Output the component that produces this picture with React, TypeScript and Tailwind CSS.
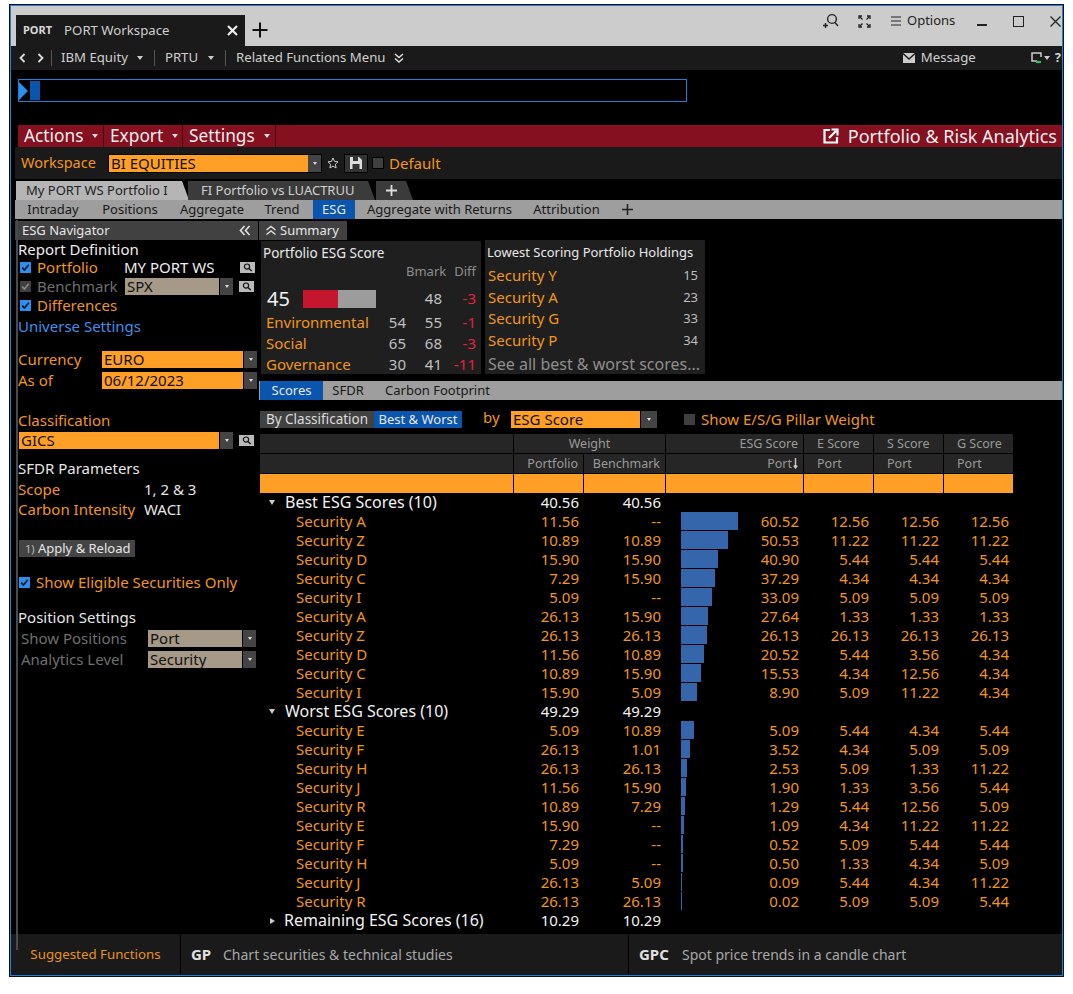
import React from "react";

const O = "text-[#f0961e]";

function Caret({ className = "" }: { className?: string }) {
  return <span className={`inline-block w-0 h-0 border-x-[3px] border-x-transparent border-t-[4px] border-t-current ${className}`} />;
}

function Check({ on = true }: { on?: boolean }) {
  return (
    <span className={`w-[11px] h-[11px] flex items-center justify-center shrink-0 ${on ? "bg-[#2a8fef]" : "bg-[#3f3f3f]"}`}>
      <svg width="9" height="9" viewBox="0 0 9 9"><path d="M1.2 4.6 3.4 7 7.8 1.8" fill="none" stroke={on ? "#06121f" : "#888"} strokeWidth="1.6" /></svg>
    </span>
  );
}

function Find() {
  return (
    <span className="w-[15px] h-[11px] bg-[#b9b9b9] flex items-center justify-center shrink-0">
      <svg width="10" height="9" viewBox="0 0 10 9"><circle cx="4" cy="3.6" r="2.6" fill="none" stroke="#111" strokeWidth="1.2" /><path d="M6 5.6 8.6 8" stroke="#111" strokeWidth="1.4" /></svg>
    </span>
  );
}

function Drop({ label, w, tone = "orange", btn = 13 }: { label: string; w: string; tone?: "orange" | "tan"; btn?: number }) {
  const bg = tone === "orange" ? "bg-[#ff9f25]" : "bg-[#a69987]";
  return (
    <div className="flex h-[17px] shrink-0 items-stretch">
      <div className={`${w} ${bg} text-[#111] pl-[2px] leading-[17px] text-[15px] whitespace-nowrap`}>{label}</div>
      <div className="ml-px bg-[#444] text-[#ddd] flex items-center justify-center" style={{ width: btn }}>
        <Caret className="!border-x-[2px] !border-t-[3px]" />
      </div>
    </div>
  );
}

const best: [string, string, string, number, string, string, string, string][] = [
  ["Security A", "11.56", "--", 57, "60.52", "12.56", "12.56", "12.56"],
  ["Security Z", "10.89", "10.89", 47, "50.53", "11.22", "11.22", "11.22"],
  ["Security D", "15.90", "15.90", 37, "40.90", "5.44", "5.44", "5.44"],
  ["Security C", "7.29", "15.90", 34, "37.29", "4.34", "4.34", "4.34"],
  ["Security I", "5.09", "--", 31, "33.09", "5.09", "5.09", "5.09"],
  ["Security A", "26.13", "15.90", 27, "27.64", "1.33", "1.33", "1.33"],
  ["Security Z", "26.13", "26.13", 26, "26.13", "26.13", "26.13", "26.13"],
  ["Security D", "11.56", "10.89", 23, "20.52", "5.44", "3.56", "4.34"],
  ["Security C", "10.89", "15.90", 20, "15.53", "4.34", "12.56", "4.34"],
  ["Security I", "15.90", "5.09", 16, "8.90", "5.09", "11.22", "4.34"],
];
const worst: typeof best = [
  ["Security E", "5.09", "10.89", 13, "5.09", "5.44", "4.34", "5.44"],
  ["Security F", "26.13", "1.01", 9, "3.52", "4.34", "5.09", "5.09"],
  ["Security H", "26.13", "26.13", 6, "2.53", "5.09", "1.33", "11.22"],
  ["Security J", "11.56", "15.90", 5, "1.90", "1.33", "3.56", "5.44"],
  ["Security R", "10.89", "7.29", 4, "1.29", "5.44", "12.56", "5.09"],
  ["Security E", "15.90", "--", 3, "1.09", "4.34", "11.22", "11.22"],
  ["Security F", "7.29", "--", 2, "0.52", "5.09", "5.44", "5.44"],
  ["Security H", "5.09", "--", 2, "0.50", "1.33", "4.34", "5.09"],
  ["Security J", "26.13", "5.09", 1, "0.09", "5.44", "4.34", "11.22"],
  ["Security R", "26.13", "26.13", 1, "0.02", "5.09", "5.09", "5.44"],
];

const GRID = "grid grid-cols-[254px_65px_82px_138px_70px_70px_70px] h-[19px] leading-[19px] text-[15px]";

function Group({ label, p, b, open = true }: { label: string; p: string; b: string; open?: boolean }) {
  return (
    <div className={`${GRID} text-[#f2f2f2]`}>
      <div className="flex items-center pl-[9px]">
        {open ? (
          <span className="w-0 h-0 border-x-[3px] border-x-transparent border-t-[5px] border-t-[#ccc]" />
        ) : (
          <span className="w-0 h-0 border-y-[3px] border-y-transparent border-l-[5px] border-l-[#ccc] mx-[1px] -mr-[1px]" />
        )}
        <span className="whitespace-nowrap text-[16px] ml-[10px]">{label}</span>
      </div>
      <div className="text-right">{p}</div>
      <div className="text-right">{b}</div>
    </div>
  );
}

function Row({ r }: { r: (typeof best)[number] }) {
  return (
    <div className={`${GRID} ${O}`}>
      <div className="pl-[36px]">{r[0]}</div>
      <div className="text-right">{r[1]}</div>
      <div className="text-right">{r[2]}</div>
      <div className="relative text-right">
        <div className="absolute left-[20px] top-0 h-[18px] bg-[#3566ab]" style={{ width: r[3] }} />
        {r[4]}
      </div>
      <div className="text-right">{r[5]}</div>
      <div className="text-right">{r[6]}</div>
      <div className="text-right">{r[7]}</div>
    </div>
  );
}

function Sub({ children, active = false, cls = "" }: { children: React.ReactNode; active?: boolean; cls?: string }) {
  return (
    <div className={`h-full flex items-center justify-center whitespace-nowrap ${active ? "bg-[#0a55ad] text-[#e8e8e8]" : "text-[#181818]"} ${cls}`}>{children}</div>
  );
}

function LeftPanel() {
  return (
    <div className="w-[243px] shrink-0 text-[15px] leading-[19px]">
      <div className="h-[19px] bg-[#414141] text-[#e6e6e6] flex items-center justify-between pl-[7px] pr-[7px] text-[13px]">
        <span>ESG Navigator</span>
        <svg width="12" height="11" viewBox="0 0 12 11"><path d="M5.5 1 1.5 5.5 5.5 10M10.5 1 6.5 5.5 10.5 10" fill="none" stroke="#ddd" strokeWidth="1.7" /></svg>
      </div>
      <div className="pl-[3px]">
        <div className="h-[18px] text-[#eee]">Report Definition</div>
        <div className="h-[19px] flex items-center">
          <span className="ml-[2px]"><Check /></span>
          <span className={`${O} ml-[6px] w-[87px] shrink-0`}>Portfolio</span>
          <span className="text-[#eee] w-[116px] shrink-0 whitespace-nowrap">MY PORT WS</span>
          <Find />
        </div>
        <div className="h-[19px] flex items-center">
          <span className="ml-[2px]"><Check on={false} /></span>
          <span className="text-[#6f6f6f] ml-[6px] w-[88px] shrink-0">Benchmark</span>
          <Drop label="SPX" w="w-[94px]" tone="tan" />
          <span className="ml-[6px]"><Find /></span>
        </div>
        <div className="h-[19px] flex items-center">
          <span className="ml-[2px]"><Check /></span>
          <span className={`${O} ml-[6px]`}>Differences</span>
        </div>
        <div className="h-[21px] leading-[23px] text-[#3f8fe8]">Universe Settings</div>
        <div className="h-[13px]" />
        <div className="h-[21px] flex items-center">
          <span className={`${O} w-[84px] shrink-0`}>Currency</span>
          <Drop label="EURO" w="w-[141px]" />
        </div>
        <div className="h-[21px] flex items-center">
          <span className={`${O} w-[84px] shrink-0`}>As of</span>
          <Drop label="06/12/2023" w="w-[141px]" />
        </div>
        <div className="h-[18px]" />
        <div className={`h-[21px] leading-[22px] ${O}`}>Classification</div>
        <div className="h-[21px] flex items-center">
          <span className="ml-px"><Drop label="GICS" w="w-[200px]" /></span>
          <span className="ml-[6px]"><Find /></span>
        </div>
        <div className="h-[7px]" />
        <div className="h-[21px] leading-[21px] text-[#e6e6e6]">SFDR Parameters</div>
        <div className="h-[20px] flex items-center"><span className={`${O} w-[126px] shrink-0`}>Scope</span><span className="text-[#e6e6e6]">1, 2 &amp; 3</span></div>
        <div className="h-[20px] flex items-center"><span className={`${O} w-[126px] shrink-0 whitespace-nowrap`}>Carbon Intensity</span><span className="text-[#e6e6e6]">WACI</span></div>
        <div className="h-[21px]" />
        <div className="h-[17px] w-[116px] ml-px bg-[#444] text-[#e6e6e6] text-[13px] leading-[17px] pl-[6px] whitespace-nowrap"><span className="text-[#bbb] text-[11px]">1)</span> Apply &amp; Reload</div>
        <div className="h-[15px]" />
        <div className="h-[20px] flex items-center">
          <span className="ml-[1px]"><Check /></span>
          <span className={`${O} ml-[6px] whitespace-nowrap`}>Show Eligible Securities Only</span>
        </div>
        <div className="h-[15px]" />
        <div className="h-[21px] leading-[21px] text-[#e6e6e6]">Position Settings</div>
        <div className="h-[21px] flex items-center pl-[3px]">
          <span className="text-[#6f6f6f] w-[127px] shrink-0">Show Positions</span>
          <Drop label="Port" w="w-[94px]" tone="tan" />
        </div>
        <div className="h-[21px] flex items-center pl-[3px]">
          <span className="text-[#6f6f6f] w-[127px] shrink-0">Analytics Level</span>
          <Drop label="Security" w="w-[94px]" tone="tan" />
        </div>
      </div>
    </div>
  );
}

function Summary() {
  const rows: [string, string, string, string][] = [
    ["Environmental", "54", "55", "-1"],
    ["Social", "65", "68", "-3"],
    ["Governance", "30", "41", "-11"],
  ];
  return (
    <div className="flex items-start ml-[2px] h-[134px] text-[15px]">
      <div className="w-[220px] h-[133px] mt-[1px] bg-[#1f1f1f] relative">
        <div className="h-[24px] leading-[25px] pl-[2px] text-[13.5px] text-[#e8e8e8]">Portfolio ESG Score</div>
        <div className="grid grid-cols-[145px_37px_33px] h-[13px] leading-[13px] text-[13px] text-[#8e8e8e] text-right"><span /><span>Bmark</span><span>Diff</span></div>
        <div className="h-[34px] flex items-center pt-[7px] relative">
          <span className="ml-[6px] w-[36px] text-[20px] text-[#f2f2f2] shrink-0">45</span>
          <div className="flex h-[18px] w-[73px] shrink-0">
            <div className="w-[35px] bg-[#c4162f]" />
            <div className="flex-1 bg-[#9c9c9c]" />
          </div>
          <div className="grid grid-cols-[66px_34px] text-right w-[100px] shrink-0"><span className="text-[#c0c0c0]">48</span><span className="text-[#e5213f]">-3</span></div>
        </div>
        {rows.map((r) => (
          <div key={r[0]} className="grid grid-cols-[5px_104px_36px_36px_34px] h-[21px] leading-[21px] text-right">
            <span />
            <span className={`${O} text-left whitespace-nowrap`}>{r[0]}</span>
            <span className="text-[#c0c0c0]">{r[1]}</span>
            <span className="text-[#c0c0c0]">{r[2]}</span>
            <span className="text-[#e5213f]">{r[3]}</span>
          </div>
        ))}
      </div>
      <div className="w-[220px] h-[134px] ml-[4px] bg-[#1f1f1f] pl-[2px] pr-[7px]">
        <div className="h-[24px] leading-[24px] text-[13px] text-[#e8e8e8] whitespace-nowrap">Lowest Scoring Portfolio Holdings</div>
        {[["Security Y", "15"], ["Security A", "23"], ["Security G", "33"], ["Security P", "34"]].map((r) => (
          <div key={r[1]} className="h-[21.5px] leading-[22px] flex justify-between pl-[1px]">
            <span className={O}>{r[0]}</span>
            <span className="text-[#bdbdbd] text-[13px]">{r[1]}</span>
          </div>
        ))}
        <div className="h-[24px] leading-[29px] pl-[1px] text-[16px] text-[#8e8e8e] whitespace-nowrap">See all best &amp; worst scores...</div>
      </div>
    </div>
  );
}

function TableHead() {
  const c = "bg-[#262626] text-[#9a9a9a] h-[19px] leading-[19px] text-[12.5px] px-[5px]";
  const o = "bg-[#ff9f25] h-[19px]";
  return (
    <div className="grid grid-cols-[253px_69px_81px_137px_69px_69px_69px] gap-x-px gap-y-px w-[754px]">
      <div className={c} />
      <div className={`${c} col-span-2 text-center`}>Weight</div>
      <div className={`${c} text-right`}>ESG Score</div>
      <div className={`${c} pl-[13px]`}>E Score</div>
      <div className={`${c} pl-[13px]`}>S Score</div>
      <div className={`${c} pl-[13px]`}>G Score</div>
      <div className={c} />
      <div className={`${c} text-right`}>Portfolio</div>
      <div className={`${c} text-right`}>Benchmark</div>
      <div className={`${c} text-right flex justify-end items-center gap-[1px]`}>Port
        <svg width="5" height="11" viewBox="0 0 5 11"><path d="M2.5 0V9M0.8 7.5 2.5 10 4.2 7.5" fill="none" stroke="#ccc" strokeWidth="1.4" /></svg>
      </div>
      <div className={`${c} pl-[13px]`}>Port</div>
      <div className={`${c} pl-[13px]`}>Port</div>
      <div className={`${c} pl-[13px]`}>Port</div>
      <div className={o} /><div className={o} /><div className={o} /><div className={o} /><div className={o} /><div className={o} /><div className={o} />
    </div>
  );
}

function RightPanel() {
  return (
    <div className="w-[805px] ml-[1px] text-[15px]">
      <div className="h-[19px] w-[88px] bg-[#414141] text-[#e6e6e6] text-[13px] leading-[19px] flex items-center pl-[6px] gap-[3px]">
        <svg width="12" height="11" viewBox="0 0 12 11"><path d="M1.5 5 6 1.5 10.5 5M1.5 9.5 6 6 10.5 9.5" fill="none" stroke="#ddd" strokeWidth="1.5" /></svg>
        Summary
      </div>
      <Summary />
      <div className="h-[7px]" />
      <div className="h-[19px] bg-[#9e9e9e] flex items-stretch text-[13px]">
        <Sub active cls="w-[63px] ml-[1px]">Scores</Sub>
        <Sub cls="w-[50px]">SFDR</Sub>
        <Sub cls="w-[129px]">Carbon Footprint</Sub>
      </div>
      <div className="h-[10px]" />
      <div className="flex items-center h-[18px] ml-[1px]">
        <div className="h-[17px] w-[114px] bg-[#414141] text-[#ddd] text-[13.5px] leading-[17px] text-center whitespace-nowrap">By Classification</div>
        <div className="h-[17px] w-[88px] bg-[#0a55ad] text-[#e8e8e8] text-[13px] leading-[17px] text-center whitespace-nowrap">Best &amp; Worst</div>
        <span className={`${O} ml-[21px] w-[28px] -mt-[3px]`}>by</span>
        <Drop label="ESG Score" w="w-[129px]" btn={16} />
        <span className="w-[11px] h-[11px] bg-[#3f3f3f] ml-[27px]" />
        <span className={`${O} ml-[6px] whitespace-nowrap`}>Show E/S/G Pillar Weight</span>
      </div>
      <div className="h-[6px]" />
      <div className="ml-[1px]"><TableHead /></div>
      <div className="ml-[1px]">
        <Group label="Best ESG Scores (10)" p="40.56" b="40.56" />
        {best.map((r, i) => <Row key={i} r={r} />)}
        <Group label="Worst ESG Scores (10)" p="49.29" b="49.29" />
        {worst.map((r, i) => <Row key={i} r={r} />)}
        <Group label="Remaining ESG Scores (16)" p="10.29" b="10.29" open={false} />
      </div>
    </div>
  );
}

export default function App() {
  return (
    <div className="w-[1073px] h-[994px] bg-white pt-[4px] pl-[9px] font-['Noto_Sans',sans-serif] overflow-hidden">
      <div className="w-[1055px] h-[973px] border border-[#06121f] relative">
        <div className="w-full h-full border border-[#2380d8] bg-black flex flex-col overflow-hidden">
          {/* title bar */}
          <div className="h-[40px] shrink-0 bg-[#cccccc] flex items-end pl-[5px] relative">
            <div className="w-[229px] h-[31px] bg-[#1a1a1a] flex items-center pl-[7px] pr-[7px] text-[13.2px] text-[#cfcfcf]">
              <span className="text-[11px] font-bold text-[#d8d8d8] mr-[12px]">PORT</span>
              <span className="flex-1">PORT Workspace</span>
              <svg width="11" height="11" viewBox="0 0 11 11"><path d="M1 1 10 10M10 1 1 10" stroke="#eee" strokeWidth="2.2" /></svg>
            </div>
            <svg className="ml-[7px] mb-[8px]" width="16" height="16" viewBox="0 0 16 16"><path d="M8 .5V15.5M.5 8H15.5" stroke="#111" strokeWidth="2" /></svg>
            <div className="absolute right-0 top-0 h-[30px] flex items-center text-[13px] text-[#222] w-[250px]">
              <svg className="ml-[10px]" width="17" height="17" viewBox="0 0 17 17"><circle cx="10" cy="6" r="4.4" fill="none" stroke="#222" strokeWidth="1.4" /><path d="M13 9.5 16 13M1 12.5H6M3.5 10V15" stroke="#222" strokeWidth="1.4" /></svg>
              <svg className="ml-[19px]" width="13" height="13" viewBox="0 0 13 13"><path d="M1 4V1H4M9 1H12V4M12 9V12H9M4 12H1V9M2 2 4.5 4.5M11 2 8.5 4.5M11 11 8.5 8.5M2 11 4.5 8.5" fill="none" stroke="#222" strokeWidth="1.3" /></svg>
              <svg className="ml-[20px]" width="10" height="10" viewBox="0 0 10 10"><path d="M0 1H10M0 5H10M0 9H10" stroke="#222" strokeWidth="1.2" /></svg>
              <span className="ml-[6px] w-[48px]">Options</span>
              <span className="ml-[22px] w-[10px] h-[1.5px] bg-[#222] mt-[8px]" />
              <span className="ml-[26px] w-[11px] h-[11px] border-[1.5px] border-[#222]" />
              <svg className="ml-[26px]" width="11" height="11" viewBox="0 0 11 11"><path d="M.5.5 10.5 10.5M10.5.5 .5 10.5" stroke="#222" strokeWidth="1.3" /></svg>
            </div>
          </div>
          {/* nav bar */}
          <div className="h-[24px] shrink-0 bg-[#1a1a1a] flex items-center text-[13.2px] text-[#cfcfcf] pl-[8px] relative">
            <svg className="shrink-0" width="7" height="10" viewBox="0 0 7 10"><path d="M5.5 1 1.5 5 5.5 9" fill="none" stroke="#ddd" strokeWidth="1.8" /></svg>
            <svg className="ml-[11px] shrink-0" width="7" height="10" viewBox="0 0 7 10"><path d="M1.5 1 5.5 5 1.5 9" fill="none" stroke="#ddd" strokeWidth="1.8" /></svg>
            <span className="w-px h-[16px] bg-[#555] ml-[7px]" />
            <span className="ml-[9px]">IBM Equity</span>
            <Caret className="ml-[9px] text-[#ccc]" />
            <span className="w-px h-[16px] bg-[#555] ml-[11px]" />
            <span className="ml-[10px]">PRTU</span>
            <Caret className="ml-[10px] text-[#ccc]" />
            <span className="w-px h-[16px] bg-[#555] ml-[11px]" />
            <span className="ml-[10px]">Related Functions Menu</span>
            <svg className="ml-[9px]" width="10" height="10" viewBox="0 0 10 10"><path d="M1 1 5 4.5 9 1M1 5.5 5 9 9 5.5" fill="none" stroke="#ddd" strokeWidth="1.5" /></svg>
            <div className="ml-auto flex items-center mr-[1px]">
              <svg width="12" height="12" viewBox="0 0 12 12"><path d="M0 1H12V11H0Z" fill="#ccc" /><path d="M0 1.5 6 7 12 1.5" fill="none" stroke="#1a1a1a" strokeWidth="1.4" /></svg>
              <span className="ml-[6px] w-[110px]">Message</span>
              <svg width="11" height="12" viewBox="0 0 11 12"><path d="M6 9H1V1H10V5" fill="none" stroke="#ccc" strokeWidth="1.5" /><path d="M5 10H10" stroke="#22c55e" strokeWidth="2.2" /></svg>
              <Caret className="ml-[2px] text-[#ccc]" />
              <span className="ml-[5px] font-bold text-[13px]">?</span>
            </div>
          </div>
          {/* command line */}
          <div className="h-[55px] shrink-0 pt-[9px] pl-[7px]">
            <div className="w-[669px] h-[23px] border border-[#2380d8] flex items-center">
              <span className="w-0 h-0 border-y-[9px] border-y-transparent border-l-[9px] border-l-[#2a8fef]" />
              <span className="w-[10px] h-[19px] bg-[#0a55ad] ml-[2px]" />
            </div>
          </div>
          {/* red bar */}
          <div className="h-[22px] shrink-0 ml-[7px] bg-[#85101f] flex items-stretch text-white/95 text-[18px] leading-[22px]">
            <div className="w-[86px] pl-[6px] text-[17.3px] border-r border-black/50 flex items-center whitespace-nowrap">Actions<Caret className="ml-[9px] text-[#ddd]" /></div>
            <div className="w-[79px] pl-[6px] text-[17.3px] border-r border-black/50 flex items-center whitespace-nowrap">Export<Caret className="ml-[9px] text-[#ddd]" /></div>
            <div className="w-[93px] pl-[6px] text-[17.3px] border-r border-black/50 flex items-center whitespace-nowrap">Settings<Caret className="ml-[9px] text-[#ddd]" /></div>
            <div className="ml-auto flex items-center pr-[5px]">
              <svg width="16" height="16" viewBox="0 0 16 16"><path d="M7 2H1.5V14.5H14V9" fill="none" stroke="#fff" strokeWidth="2.2" /><path d="M6 10 13 3M8.5 1.5H14.5V7.5" fill="none" stroke="#fff" strokeWidth="2.2" /></svg>
              <span className="ml-[9px]">Portfolio &amp; Risk Analytics</span>
            </div>
          </div>
          {/* workspace */}
          <div className="h-[32px] shrink-0 ml-[4px] bg-[#1a1a1a] flex items-center text-[14.5px]">
            <span className={`${O} ml-[6px] w-[87px]`}>Workspace</span>
            <div className="border border-black flex h-[19px]">
              <div className="w-[199px] bg-[#ff9f25] text-[#111] pl-[2px] leading-[17px] text-[15px]">BI EQUITIES</div>
              <div className="w-[13px] bg-[#444] text-[#ddd] flex items-center justify-center"><Caret className="!border-x-[2px] !border-t-[3px]" /></div>
            </div>
            <svg className="ml-[5px]" width="12" height="12" viewBox="0 0 12 12"><path d="M6 1 7.5 4.4 11 4.8 8.4 7.2 9.1 11 6 9.1 2.9 11 3.6 7.2 1 4.8 4.5 4.4Z" fill="none" stroke="#ccc" strokeWidth="1" /></svg>
            <span className="ml-[5px] w-[24px] h-[19px] bg-[#333] border border-black flex items-center justify-center">
              <svg width="12" height="12" viewBox="0 0 12 12"><path d="M0 0H9L12 3V12H0Z" fill="#ddd" /><path d="M3 0H8V4H3ZM2.5 7H9.5V12H2.5Z" fill="#333" /></svg>
            </span>
            <span className="ml-[4px] w-[12px] h-[12px] bg-[#3f3f3f] border border-black" />
            <span className={`${O} ml-[5px] text-[15px]`}>Default</span>
          </div>
          {/* tabs */}
          <div className="h-[19px] shrink-0 mt-[2px] ml-[5px] flex items-end text-[13px] leading-[19px]">
            <div className="w-[173px] h-[19px] bg-[#b5b5b5] text-[#222] pl-[10px] [clip-path:polygon(0_0,166px_0,100%_100%,0_100%)] whitespace-nowrap">My PORT WS Portfolio I</div>
            <div className="w-[187px] h-[19px] -ml-[1px] bg-[#3b3b3b] text-[#d0d0d0] pl-[13px] [clip-path:polygon(0_0,180px_0,100%_100%,0_100%)] whitespace-nowrap">FI Portfolio vs LUACTRUU</div>
            <div className="w-[37px] h-[19px] ml-[1px] bg-[#3b3b3b] text-[#ddd] [clip-path:polygon(0_0,30px_0,100%_100%,0_100%)] flex items-center pl-[10px]">
              <svg width="11" height="11" viewBox="0 0 11 11"><path d="M5.5 0V11M0 5.5H11" stroke="#ddd" strokeWidth="1.8" /></svg>
            </div>
          </div>
          {/* sub tabs */}
          <div className="h-[19px] shrink-0 ml-[4px] bg-[#9e9e9e] flex items-stretch text-[13px]">
            <Sub cls="w-[76px]">Intraday</Sub>
            <Sub cls="w-[78px]">Positions</Sub>
            <Sub cls="w-[86px]">Aggregate</Sub>
            <Sub cls="w-[54px]">Trend</Sub>
            <Sub active cls="w-[42px] ml-[4px]">ESG</Sub>
            <Sub cls="w-[169px]">Aggregate with Returns</Sub>
            <Sub cls="w-[85px]">Attribution</Sub>
            <Sub cls="w-[36px]"><svg width="11" height="11" viewBox="0 0 11 11"><path d="M5.5 0V11M0 5.5H11" stroke="#222" strokeWidth="1.6" /></svg></Sub>
          </div>
          {/* main */}
          <div className="h-[713px] shrink-0 mt-[2px] ml-[4px] flex overflow-hidden">
            <LeftPanel />
            <RightPanel />
          </div>
          {/* footer */}
          <div className="flex-1 flex text-[14px] items-stretch">
            <div className="w-[169px] bg-[#1a1a1a] flex items-center justify-center text-[13.3px] text-[#e8911c]">Suggested Functions</div>
            <div className="ml-px w-[447px] bg-[#1a1a1a] flex items-center pl-[10px] text-[#a8a8a8]"><b className="text-[15px] text-[#e0e0e0] w-[32px]">GP</b>Chart securities &amp; technical studies</div>
            <div className="ml-px flex-1 bg-[#1a1a1a] flex items-center pl-[10px] text-[#a8a8a8]"><b className="text-[15px] text-[#e0e0e0] w-[43px]">GPC</b>Spot price trends in a candle chart</div>
          </div>
        </div>
        <div className="absolute left-[6px] top-[215px] w-[2px] h-[730px] bg-[#4a4a4a]" />
      </div>
    </div>
  );
}
